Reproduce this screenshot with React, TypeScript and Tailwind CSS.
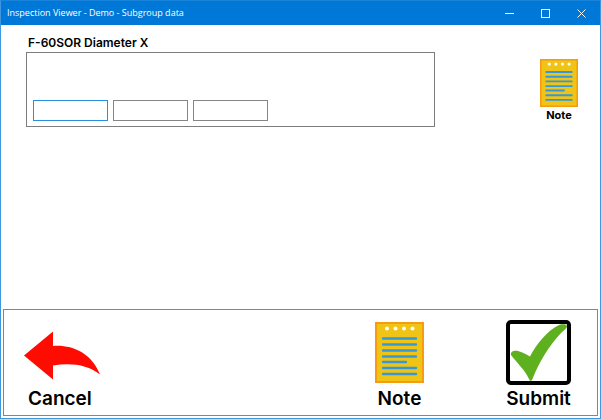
import React, { useState } from "react";

const MEASUREMENTS = ["1", "2", "3"];

const NOTE_LINES = [
  { y: 16, width: 35 },
  { y: 22, width: 35 },
  { y: 28, width: 35 },
  { y: 34, width: 35 },
  { y: 39.5, width: 25 },
  { y: 45.5, width: 35 },
  { y: 51.5, width: 35 },
];

function NoteIcon({ className }: { className: string }) {
  return (
    <svg viewBox="0 0 49 61" preserveAspectRatio="none" className={className} aria-hidden="true">
      <rect width="49" height="61" fill="#f99b12" />
      <rect x="2" y="2" width="45" height="57" fill="#f0c414" />
      {[12, 20.5, 29, 37.5].map((x) => (
        <circle key={x} cx={x} cy="6.5" r="2" fill="#fff" />
      ))}
      {NOTE_LINES.map((line) => (
        <rect key={line.y} x="7" y={line.y - 0.7} width={line.width} height="2.4" rx="0.8" fill="#3498db" />
      ))}
    </svg>
  );
}

function CancelIcon() {
  return (
    <svg viewBox="0 0 76 49" className="h-[49px] w-[76px]" aria-hidden="true">
      <path d="M0 24.5 L29 0.5 V15 C47 13.5 67 21 76 43.5 C63 33 46 31.500 29 34.500 V48.500 Z" fill="#fe0b02" />
    </svg>
  );
}

function SubmitIcon() {
  return (
    <svg viewBox="0 0 65 65" className="size-[65px]" aria-hidden="true">
      <rect x="2" y="2" width="61" height="61" rx="3" fill="#fff" stroke="#000" strokeWidth="4" />
      <path
        d="M5 35 C4 31 9 30 12 31 C16 32 20 34 24 36.500 C30 25 41 11 52 5.500 C55 4 60 3.500 61 6 C61.500 8 58 10 55 13 C43 26 33 42 26.500 59 C25.500 61.500 24 61.500 23 59 C19 50 11 43 5 35 Z"
        fill="#5fb01e"
      />
    </svg>
  );
}

function TitleBar() {
  return (
    <header className="flex h-6 items-center justify-between bg-[#0078d7] pr-px pl-[6px] text-white">
      <h1 className="font-['Open_Sans','Noto_Sans',sans-serif] text-[9px]">
        Inspection Viewer - Demo - Subgroup data
      </h1>
      <div className="flex h-full">
        <button type="button" aria-label="Minimize" className="flex h-full w-9 items-center justify-center">
          <svg viewBox="0 0 9 9" className="size-[9px]" fill="none" stroke="currentColor">
            <path d="M0 4.500 H9" />
          </svg>
        </button>
        <button type="button" aria-label="Maximize" className="flex h-full w-9 items-center justify-center">
          <svg viewBox="0 0 9 9" className="size-[9px]" fill="none" stroke="currentColor">
            <rect x="0.5" y="0.5" width="8" height="8" />
          </svg>
        </button>
        <button type="button" aria-label="Close" className="flex h-full w-9 items-center justify-center">
          <svg viewBox="0 0 9 9" className="size-[9px]" fill="none" stroke="currentColor">
            <path d="M0.500 0.500 L8.500 8.500 M8.500 0.500 L0.500 8.500" />
          </svg>
        </button>
      </div>
    </header>
  );
}

export default function App() {
  const [values, setValues] = useState<string[]>(MEASUREMENTS.map(() => ""));

  const handleChange = (index: number, value: string) => {
    setValues((prev) => prev.map((v, i) => (i === index ? value : v)));
  };

  return (
    <div className="flex min-h-screen flex-col border border-[#3f97e0] border-t-[#1a84da] bg-white font-[Inter,'Liberation_Sans',sans-serif] text-black">
      <TitleBar />

      <main className="flex flex-1 items-start justify-between pt-2 pr-[22px] pl-[25px]">
        <section aria-labelledby="characteristic" className="w-[409px]">
          <h2 id="characteristic" className="pl-[2px] text-xs leading-[19px] font-semibold">
            F-60SOR Diameter X
          </h2>
          <div className="flex h-[75px] items-end gap-[5px] border border-[#7d7d7d] px-[6px] pb-[5px]">
            {MEASUREMENTS.map((name, index) => (
              <input
                key={name}
                type="text"
                aria-label={`Measurement ${name}`}
                value={values[index]}
                onChange={(e) => handleChange(index, e.target.value)}
                className="h-[21px] w-[75px] border border-[#858585] px-1 text-xs outline-none first:border-[#2b8fe0] focus:border-[#2b8fe0]"
              />
            ))}
          </div>
        </section>

        <button type="button" className="mt-[26px] flex flex-col items-center text-[11px] leading-4 font-bold">
          <NoteIcon className="h-12 w-[38px]" />
          Note
        </button>
      </main>

      <footer className="mx-[2px] mb-[2px] flex h-[107px] items-end border border-[#858585] pr-[26px] pb-[5px] pl-5 text-[19px] leading-[22px] font-semibold">
        <button type="button" className="mr-auto flex flex-col items-start gap-2">
          <CancelIcon />
          <span className="pl-1">Cancel</span>
        </button>
        <button type="button" className="mr-[82px] flex flex-col items-center gap-[5px]">
          <NoteIcon className="h-[61px] w-[49px]" />
          Note
        </button>
        <button type="button" className="flex flex-col items-center gap-[3px]">
          <SubmitIcon />
          Submit
        </button>
      </footer>
    </div>
  );
}
